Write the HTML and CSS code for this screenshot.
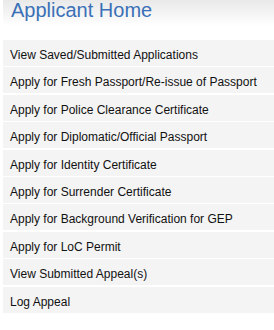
FILE: index.html
```html
<!DOCTYPE html>
<html>
<head>
<meta charset="utf-8">
<link rel="stylesheet" href="styles.css">
</head>
<body>
<div class="page">
  <div class="header"><h1 class="title">Applicant Home</h1></div>
  <ul class="menu">
    <li class="item">View Saved/Submitted Applications</li>
    <li class="item">Apply for Fresh Passport/Re-issue of Passport</li>
    <li class="item">Apply for Police Clearance Certificate</li>
    <li class="item">Apply for Diplomatic/Official Passport</li>
    <li class="item">Apply for Identity Certificate</li>
    <li class="item">Apply for Surrender Certificate</li>
    <li class="item">Apply for Background Verification for GEP</li>
    <li class="item">Apply for LoC Permit</li>
    <li class="item">View Submitted Appeal(s)</li>
    <li class="item">Log Appeal</li>
  </ul>
</div>
</body>
</html>
```
FILE: styles.css
```css
html, body { margin: 0; padding: 0; background: #fff; }
body { font-family: "Liberation Sans", Arial, sans-serif; }
.page { padding-left: 3px; }
.header {
  height: 26px;
  background: linear-gradient(#e9e9e9, #ffffff);
}
.title {
  margin: 0;
  padding-left: 8px;
  font-weight: normal;
  font-size: 20px;
  line-height: 20px;
  color: #3a70b7;
}
.menu {
  list-style: none;
  margin: 14px 0 0 0;
  padding: 0;
  display: flex;
  flex-direction: column;
  gap: 1.4px;
}
.item {
  box-sizing: border-box;
  background: #f4f4f4;
  height: 26px;
  padding: 4px 0 0 7px;
  line-height: 22px;
  font-size: 12px;
  color: #111;
}
```
